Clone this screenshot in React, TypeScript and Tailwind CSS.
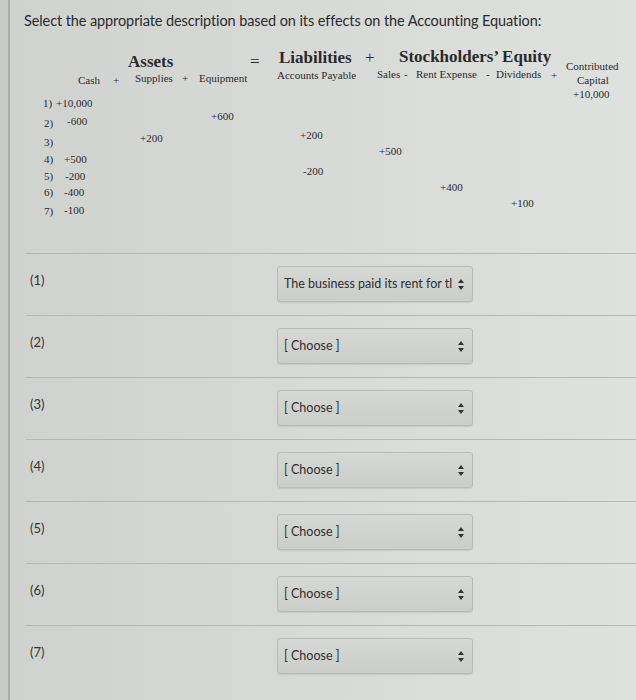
import React from "react";

const serif = { fontFamily: '"Liberation Serif", "Times New Roman", serif' };

type Mark = { text: string; x: number; y: number; size?: "sm" | "lg"; bold?: boolean };

// the equation is a picture in the page, so its marks sit at fixed spots
const marks: Mark[] = [
  { text: "Assets", x: 128, y: 8, size: "lg", bold: true },
  { text: "=", x: 250, y: 8, size: "lg" },
  { text: "Liabilities", x: 279, y: 4, size: "lg", bold: true },
  { text: "+", x: 365, y: 4, size: "lg" },
  { text: "Stockholders\u2019 Equity", x: 399, y: 3, size: "lg", bold: true },
  { text: "Cash", x: 78, y: 30 },
  { text: "+", x: 113, y: 30 },
  { text: "Supplies", x: 135, y: 28 },
  { text: "+", x: 182, y: 28 },
  { text: "Equipment", x: 199, y: 28 },
  { text: "Accounts Payable", x: 277, y: 25 },
  { text: "Sales", x: 377, y: 24 },
  { text: "-", x: 404, y: 24 },
  { text: "Rent Expense", x: 416, y: 24 },
  { text: "-", x: 486, y: 24 },
  { text: "Dividends", x: 496, y: 24 },
  { text: "+", x: 551, y: 25 },
  { text: "Contributed", x: 566, y: 16 },
  { text: "Capital", x: 577, y: 30 },
  { text: "+10,000", x: 573, y: 44 },
  { text: "1)", x: 43, y: 53 },
  { text: "+10,000", x: 56, y: 53 },
  { text: "2)", x: 44, y: 73 },
  { text: "-600", x: 67, y: 71 },
  { text: "+600", x: 211, y: 66 },
  { text: "3)", x: 44, y: 92 },
  { text: "+200", x: 140, y: 88 },
  { text: "+200", x: 300, y: 85 },
  { text: "4)", x: 44, y: 109 },
  { text: "+500", x: 64, y: 109 },
  { text: "+500", x: 379, y: 101 },
  { text: "5)", x: 44, y: 126 },
  { text: "-200", x: 65, y: 126 },
  { text: "-200", x: 303, y: 121 },
  { text: "6)", x: 44, y: 142 },
  { text: "-400", x: 64, y: 142 },
  { text: "+400", x: 440, y: 137 },
  { text: "7)", x: 44, y: 161 },
  { text: "-100", x: 64, y: 160 },
  { text: "+100", x: 511, y: 153 },
];

const answers = [
  "The business paid its rent for tl",
  "[ Choose ]",
  "[ Choose ]",
  "[ Choose ]",
  "[ Choose ]",
  "[ Choose ]",
  "[ Choose ]",
];

function Arrows() {
  return (
    <svg width="6" height="11" viewBox="0 0 6 11" className="shrink-0">
      <path d="M3 0 L6 4 L0 4 Z" fill="#333" />
      <path d="M3 11 L6 7 L0 7 Z" fill="#333" />
    </svg>
  );
}

function Equation() {
  return (
    <div className="relative h-[208px] text-[#2a2a2a]" style={serif}>
      {marks.map((m, i) => (
        <span
          key={i}
          className={`absolute whitespace-nowrap leading-none ${
            m.size === "lg" ? "text-[17px]" : "text-[11px]"
          } ${m.bold ? "font-bold" : ""}`}
          style={{ left: m.x, top: m.y }}
        >
          {m.text}
        </span>
      ))}
    </div>
  );
}

export default function App() {
  return (
    <div
      className="w-[636px] h-[700px] overflow-hidden bg-gradient-to-r from-[#c9cbc9] via-[#d6d8d6] to-[#dcdedc]"
      style={{ fontFamily: 'Lato, "Open Sans", sans-serif' }}
    >
      <div className="ml-[8px] h-full border-l-2 border-[#a9aba9] bg-gradient-to-r from-[#d0d2d0] via-[#d8dad8] to-[#dfe1df]">
        <p className="pl-[14px] pt-[11px] text-[14.5px] leading-[20px] text-[#2b2b2b] tracking-[-0.1px]">
          Select the appropriate description based on its effects on the Accounting Equation:
        </p>
        <div className="-ml-[10px] mt-[14px]">
          <Equation />
        </div>
        <div className="ml-[16px] border-t border-[#b6b8b6]">
          {answers.map((a, i) => (
            <div
              key={i}
              className="flex items-start pt-[12px] pb-[13px] border-b border-[#b6b8b6] last:border-b-0"
            >
              <span className="w-[251px] pl-[4px] pt-[5px] text-[13px] text-[#333]">({i + 1})</span>
              <div className="flex h-[36px] w-[196px] items-center justify-between gap-[6px] rounded-[3px] border border-[#b9bbb9] bg-gradient-to-b from-[#d6d8d6] to-[#cbcdcb] pl-[6px] pr-[8px] shadow-[0_1px_1px_rgba(0,0,0,0.08)]">
                <span className="overflow-hidden whitespace-nowrap text-[12.5px] text-[#2e2e2e]">{a}</span>
                <Arrows />
              </div>
            </div>
          ))}
        </div>
      </div>
    </div>
  );
}
